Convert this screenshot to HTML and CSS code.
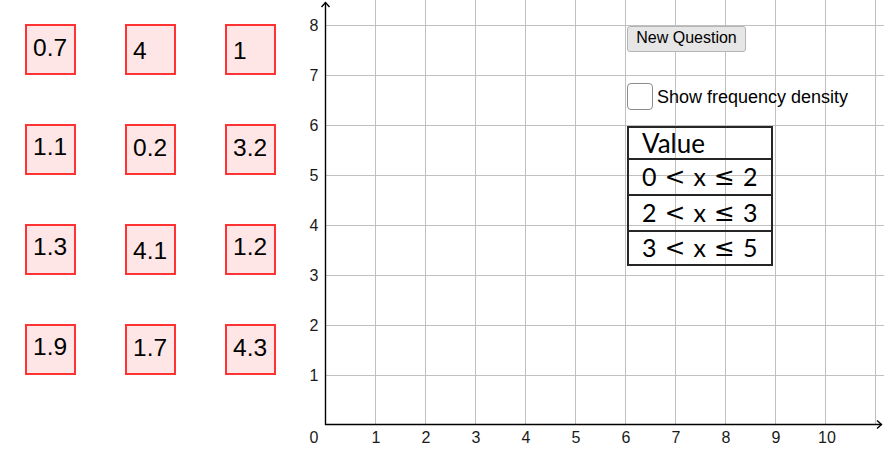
FILE: index.html
```html
<!DOCTYPE html>
<html lang="en">
<head>
<meta charset="utf-8">
<title>Histogram question</title>
<link rel="stylesheet" href="styles.css">
</head>
<body>
<div class="stage">
  <svg class="graph" width="884" height="453" viewBox="0 0 884 453" xmlns="http://www.w3.org/2000/svg">
    <g class="grid">
      <line x1="375.5" y1="0" x2="375.5" y2="424"/>
      <line x1="425.5" y1="0" x2="425.5" y2="424"/>
      <line x1="475.5" y1="0" x2="475.5" y2="424"/>
      <line x1="525.5" y1="0" x2="525.5" y2="424"/>
      <line x1="575.5" y1="0" x2="575.5" y2="424"/>
      <line x1="625.5" y1="0" x2="625.5" y2="424"/>
      <line x1="675.5" y1="0" x2="675.5" y2="424"/>
      <line x1="725.5" y1="0" x2="725.5" y2="424"/>
      <line x1="775.5" y1="0" x2="775.5" y2="424"/>
      <line x1="825.5" y1="0" x2="825.5" y2="424"/>
      <line x1="875.5" y1="0" x2="875.5" y2="424"/>
      <line x1="326" y1="25.5" x2="884" y2="25.5"/>
      <line x1="326" y1="75.5" x2="884" y2="75.5"/>
      <line x1="326" y1="125.5" x2="884" y2="125.5"/>
      <line x1="326" y1="175.5" x2="884" y2="175.5"/>
      <line x1="326" y1="225.5" x2="884" y2="225.5"/>
      <line x1="326" y1="275.5" x2="884" y2="275.5"/>
      <line x1="326" y1="325.5" x2="884" y2="325.5"/>
      <line x1="326" y1="375.5" x2="884" y2="375.5"/>
    </g>
    <g class="axes">
      <line x1="325.5" y1="2.5" x2="325.5" y2="425"/>
      <line x1="325" y1="424.5" x2="881.5" y2="424.5"/>
      <polyline points="321.5,7 325.5,2.5 329.5,7"/>
      <polyline points="877,420.5 881.5,424.5 877,428.5"/>
    </g>
    <g class="labels ylab">
      <text x="318.5" y="31">8</text>
      <text x="318.5" y="81">7</text>
      <text x="318.5" y="131">6</text>
      <text x="318.5" y="181">5</text>
      <text x="318.5" y="231">4</text>
      <text x="318.5" y="281">3</text>
      <text x="318.5" y="331">2</text>
      <text x="318.5" y="381">1</text>
    </g>
    <g class="labels xlab">
      <text x="314" y="442.5">0</text>
      <text x="376" y="442.5">1</text>
      <text x="426" y="442.5">2</text>
      <text x="476" y="442.5">3</text>
      <text x="526" y="442.5">4</text>
      <text x="576" y="442.5">5</text>
      <text x="626" y="442.5">6</text>
      <text x="676" y="442.5">7</text>
      <text x="726" y="442.5">8</text>
      <text x="776" y="442.5">9</text>
      <text x="827" y="442.5">10</text>
    </g>
  </svg>

  <div class="content">
    <div class="values">
      <div class="val">0.7</div>
      <div class="val low">4</div>
      <div class="val low">1</div>
      <div class="val high">1.1</div>
      <div class="val">0.2</div>
      <div class="val">3.2</div>
      <div class="val high">1.3</div>
      <div class="val low">4.1</div>
      <div class="val high">1.2</div>
      <div class="val high">1.9</div>
      <div class="val">1.7</div>
      <div class="val">4.3</div>
    </div>

    <div class="panel">
      <button class="btn" type="button">New Question</button>
      <label class="check">
        <span class="box"></span>
        <span class="check-text">Show frequency density</span>
      </label>
      <div class="table">
        <div class="row head">Value</div>
        <div class="row math"><span>0</span><span class="rel">&lt;</span><span>x</span><span class="rel">&le;</span><span>2</span></div>
        <div class="row math"><span>2</span><span class="rel">&lt;</span><span>x</span><span class="rel">&le;</span><span>3</span></div>
        <div class="row math last"><span>3</span><span class="rel">&lt;</span><span>x</span><span class="rel">&le;</span><span>5</span></div>
      </div>
    </div>
  </div>
</div>
</body>
</html>
```

FILE: styles.css
```css
* { box-sizing: border-box; }

html, body {
  margin: 0;
  padding: 0;
  background: #ffffff;
}

body {
  font-family: "Liberation Sans", Arial, sans-serif;
  color: #000;
}

.stage {
  position: relative;
  width: 884px;
  height: 453px;
  overflow: hidden;
}

.graph {
  position: absolute;
  left: 0;
  top: 0;
}

.grid line {
  stroke: #c0c0c0;
  stroke-width: 1;
}

.axes line,
.axes polyline {
  stroke: #000;
  stroke-width: 1.4;
  fill: none;
}

.labels text {
  font-family: "Liberation Sans", Arial, sans-serif;
  font-size: 16px;
  fill: #1a1a1a;
}

.ylab text { text-anchor: end; }
.xlab text { text-anchor: middle; }

.content {
  position: relative;
  display: flex;
  align-items: flex-start;
  padding: 24px 0 0 25px;
}

.values {
  display: grid;
  grid-template-columns: repeat(3, 51px);
  grid-auto-rows: 51px;
  column-gap: 49px;
  row-gap: 49px;
}

.val {
  width: 51px;
  height: 51px;
  border: 2px solid #ff3333;
  background: #ffe6e6;
  font-size: 24.5px;
  line-height: 24px;
  padding: 10px 0 0 6px;
  color: #000;
}

.val.high { padding-top: 8.5px; }
.val.low { padding-top: 13px; }

.panel {
  margin-left: 351px;
  margin-top: 2px;
  display: flex;
  flex-direction: column;
  align-items: flex-start;
}

.btn {
  width: 119px;
  height: 26px;
  margin: 0;
  padding: 0 0 2px;
  border: 1px solid #b4b4b4;
  border-radius: 3px;
  background: #e6e6e6;
  font-family: "Liberation Sans", Arial, sans-serif;
  font-size: 16px;
  color: #000;
  text-align: center;
}

.check {
  display: flex;
  align-items: center;
  gap: 4px;
  margin-top: 31px;
}

.box {
  width: 26px;
  height: 27px;
  border: 1px solid #8c8c8c;
  border-radius: 4px;
  background: #fff;
}

.check-text {
  font-size: 18px;
  line-height: 20px;
  color: #000;
}

.table {
  margin-top: 16px;
  width: 146px;
  border: 2px solid #262626;
  display: flex;
  flex-direction: column;
}

.row {
  display: flex;
  align-items: center;
  padding-left: 13px;
  font-family: Lato, "Noto Sans", sans-serif;
  color: #000;
}

.row + .row { border-top: 2px solid #262626; }

.head {
  height: 30px;
  font-size: 26px;
  line-height: 26px;
}

.math {
  height: 36px;
  font-size: 25px;
  line-height: 25px;
  gap: 8px;
  padding-bottom: 2px;
}

.math.last { height: 34px; }

.rel {
  font-family: "DejaVu Sans", sans-serif;
  font-size: 25px;
}
```
